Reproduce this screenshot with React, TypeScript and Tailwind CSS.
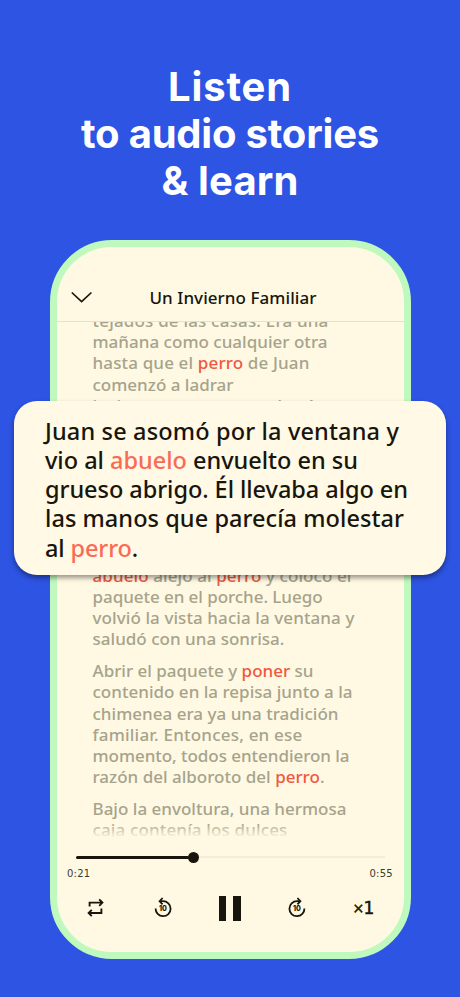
import React, { useLayoutEffect, useRef } from 'react';

type LineProps = {
  width: number;
  children: React.ReactNode;
  className?: string;
};

// One set line of text, tracked so that it fills its measure
const Line = ({ width, children, className = '' }: LineProps) => {
  const ref = useRef<HTMLSpanElement>(null);

  useLayoutEffect(() => {
    const el = ref.current;
    if (!el) return;
    el.style.letterSpacing = '0px';
    const natural = el.getBoundingClientRect().width;
    const count = (el.textContent || '').length;
    el.style.letterSpacing = `${(width - natural) / count}px`;
  }, [width]);

  return (
    <span className={`block whitespace-nowrap ${className}`}>
      <span ref={ref}>{children}</span>
    </span>
  );
};

const Word = ({ children }: { children: React.ReactNode }) => (
  <span className='text-[#f0583f]'>{children}</span>
);

const Header = () => (
  <div className='flex h-[75px] shrink-0 items-end border-b border-[#e4e1d3] px-[14px] pb-[10px]'>
    <svg width='22' height='14' viewBox='0 0 22 14' className='mb-[6px]' fill='none'>
      <path d='M1.3 2 L10.6 10.7 L19.9 2' stroke='#17150c' strokeWidth='1.7' strokeLinecap='round' />
    </svg>
    <h2 className='ml-[57px] text-[17px] leading-[26px] font-medium text-[#17150c]'>
      <Line width={167}>Un Invierno Familiar</Line>
    </h2>
  </div>
);

const Story = () => (
  <div className='relative h-[516px] shrink-0 overflow-hidden'>
    <div className='-mt-[12px] pl-[36px] text-[17px] leading-[21.2px] font-medium text-[#a6a38b]'>
      <p>
        <Line width={236}>tejados de las casas. Era una</Line>
        <Line width={235}>mañana como cualquier otra</Line>
        <Line width={217}>
          hasta que el <Word>perro</Word> de Juan
        </Line>
        <Line width={141}>comenzó a ladrar</Line>
        <Line width={220}>insistentemente cuando oí</Line>
      </p>
      <p className='mt-[148.5px]'>
        <Line width={259}>
          <Word>abuelo</Word> alejó al <Word>perro</Word> y colocó el
        </Line>
        <Line width={230}>paquete en el porche. Luego</Line>
        <Line width={262}>volvió la vista hacia la ventana y</Line>
        <Line width={192}>saludó con una sonrisa.</Line>
      </p>
      <p className='mt-[10.8px]'>
        <Line width={221}>
          Abrir el paquete y <Word>poner</Word> su
        </Line>
        <Line width={260}>contenido en la repisa junto a la</Line>
        <Line width={246}>chimenea era ya una tradición</Line>
        <Line width={210}>familiar. Entonces, en ese</Line>
        <Line width={257}>momento, todos entendieron la</Line>
        <Line width={232}>
          razón del alboroto del <Word>perro</Word>.
        </Line>
      </p>
      <p className='mt-[10.8px]'>
        <Line width={254}>Bajo la envoltura, una hermosa</Line>
        <Line width={195}>caja contenía los dulces</Line>
      </p>
    </div>
    <div className='absolute inset-x-0 bottom-0 h-[15px] bg-linear-to-b from-[#fff9e4]/0 to-[#fff9e4]' />
  </div>
);

const Skip = ({ back = false }: { back?: boolean }) => (
  <svg width='20' height='22' viewBox='0 0 20 22' fill='none'>
    <g transform={back ? undefined : 'translate(20 0) scale(-1 1)'} stroke='#17150c' strokeWidth='1.8'>
      <path d='M2.6 11.5 A7.5 7.5 0 1 0 10 4.2 H7' />
      <path d='M9.6 1 L6.6 4.2 L9.6 7.4' />
    </g>
    <text x='10' y='14.2' textAnchor='middle' fontSize='7' fontWeight='800' fontFamily='Inter, sans-serif' fill='#17150c'>
      10
    </text>
  </svg>
);

const Repeat = () => (
  <svg width='18' height='20' viewBox='0 0 18 20' fill='none' stroke='#17150c' strokeWidth='1.9'>
    <path d='M2.6 8.6 V4.6 H15 M12.2 1.4 L15.4 4.6 L12.2 7.8' />
    <path d='M14.4 10.6 V15 H2 M4.8 11.8 L1.6 15 L4.8 18.2' />
  </svg>
);

const Player = () => (
  <div className='flex flex-col text-[#17150c]'>
    <div className='mt-[13px] flex h-[12px] items-center px-[19px]'>
      <div className='h-[3px] w-[113px] rounded-full bg-[#17150c]' />
      <div className='-ml-[1px] h-[11px] w-[11px] rounded-full bg-[#17150c]' />
      <div className='h-[2px] flex-1 bg-[#f3ecd8]' />
    </div>
    <div className="mt-[3px] flex justify-between px-[10.5px] font-['DejaVu_Sans',sans-serif] text-[10px] leading-[15px] text-[#3c392d]">
      <Line width={23.5}>0:21</Line>
      <Line width={23.5}>0:55</Line>
    </div>
    <div className='mt-[12px] flex h-[30px] items-center'>
      <div className='ml-[30px] w-[66.5px]'>
        <Repeat />
      </div>
      <div className='w-[65.5px]'>
        <Skip back />
      </div>
      <div className='flex w-[68px] gap-[7px]'>
        <div className='h-[25px] w-[7.5px] bg-[#17150c]' />
        <div className='h-[25px] w-[7.5px] bg-[#17150c]' />
      </div>
      <div className='w-[67px]'>
        <Skip />
      </div>
      <div className="flex items-center font-['DejaVu_Sans',sans-serif] text-[17px] leading-[24px] [-webkit-text-stroke:0.5px_#17150c]">
        <span className='-ml-px w-[11px] text-[14px]'>×</span>
        <span>1</span>
      </div>
    </div>
  </div>
);

const Excerpt = () => (
  <div className='absolute top-[400.5px] left-[14px] h-[174.5px] w-[432px] rounded-[23px] bg-[#fff9e6] pt-[16px] pl-[31px] text-[23.5px] leading-[29.3px] font-medium text-[#17150c] shadow-[0_3px_5px_rgba(0,0,0,0.4)]'>
    <Line width={354}>Juan se asomó por la ventana y</Line>
    <Line width={313}>
      vio al <span className='text-[#fa6b55]'>abuelo</span> envuelto en su
    </Line>
    <Line width={363}>grueso abrigo. Él llevaba algo en</Line>
    <Line width={359}>las manos que parecía molestar</Line>
    <Line width={93}>
      al <span className='text-[#fa6b55]'>perro</span>.
    </Line>
  </div>
);

const App = () => {
  return (
    <div className="relative flex h-[997px] w-[460px] flex-col items-center overflow-hidden bg-[#2d54e3] pt-[63px] font-['Noto_Sans',sans-serif]">
      <h1 className="flex h-[177px] shrink-0 flex-col items-center font-['Inter',sans-serif] text-[40px] leading-[47.2px] font-bold text-white">
        <Line width={124}>Listen</Line>
        <Line width={298}>to audio stories</Line>
        <Line width={137}>&amp; learn</Line>
      </h1>
      <div className='flex h-[719px] w-[361px] shrink-0 flex-col overflow-hidden rounded-[62px] border-[7.5px] border-[#c0f9bd] bg-[#fff9e4]'>
        <Header />
        <Story />
        <Player />
      </div>
      <Excerpt />
    </div>
  );
};

export default App;
